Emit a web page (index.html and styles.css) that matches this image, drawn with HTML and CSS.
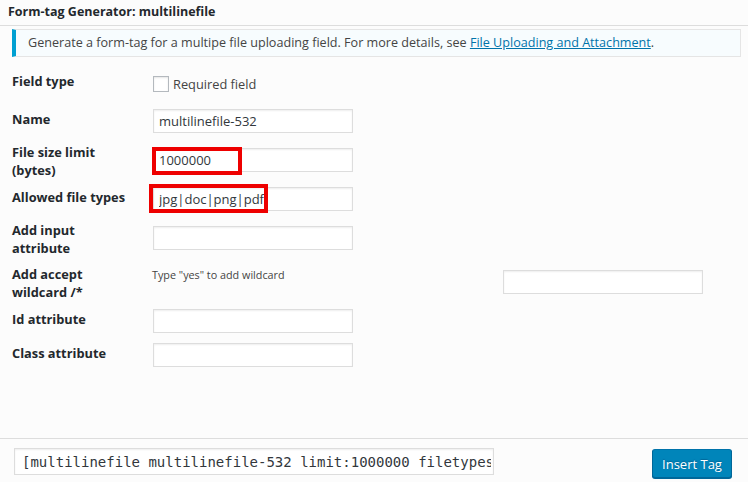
FILE: index.html
```html
<!DOCTYPE html>
<html lang="en">
<head>
<meta charset="utf-8">
<title>Form-tag Generator: multilinefile</title>
<link rel="stylesheet" href="styles.css">
</head>
<body>
<div class="modal">
  <header class="modal-title">Form-tag Generator: multilinefile</header>
  <main class="modal-content">
    <p class="notice">Generate a form-tag for a multipe file uploading field. For more details, see <a href="#">File Uploading and Attachment</a>.</p>
    <div class="form-table">
      <div class="row row-first">
        <div class="label">Field type</div>
        <div class="field">
          <label class="check"><span class="checkbox"></span><span>Required field</span></label>
        </div>
      </div>
      <div class="row">
        <div class="label">Name</div>
        <div class="field"><input class="text-input" type="text" value="multilinefile-532"></div>
      </div>
      <div class="row row-tall">
        <div class="label">File size limit<br>(bytes)</div>
        <div class="field field-offset">
          <div class="annotated">
            <input class="text-input" type="text" value="1000000">
            <span class="highlight highlight-size"></span>
          </div>
        </div>
      </div>
      <div class="row">
        <div class="label">Allowed file types</div>
        <div class="field">
          <div class="annotated">
            <input class="text-input" type="text" value="jpg|doc|png|pdf">
            <span class="highlight highlight-types"></span>
          </div>
        </div>
      </div>
      <div class="row row-tall">
        <div class="label">Add input<br>attribute</div>
        <div class="field field-offset"><input class="text-input" type="text" value=""></div>
      </div>
      <div class="row row-tall">
        <div class="label">Add accept<br>wildcard /*</div>
        <div class="field field-split">
          <span class="hint">Type "yes" to add wildcard</span>
          <input class="text-input input-offset" type="text" value="">
        </div>
      </div>
      <div class="row">
        <div class="label">Id attribute</div>
        <div class="field"><input class="text-input" type="text" value=""></div>
      </div>
      <div class="row">
        <div class="label">Class attribute</div>
        <div class="field"><input class="text-input" type="text" value=""></div>
      </div>
    </div>
  </main>
  <footer class="insert-box">
    <input class="tag-code" type="text" readonly value="[multilinefile multilinefile-532 limit:1000000 filetypes:jpg|doc|png|pdf]">
    <button class="button-primary" type="button">Insert Tag</button>
  </footer>
</div>
</body>
</html>
```

FILE: styles.css
```css
html, body {
  margin: 0;
  padding: 0;
}

body {
  background: #fcfcfc;
  color: #23282d;
  font-family: "Open Sans", "Lato", sans-serif;
  font-size: 12.6px;
}

.modal {
  display: flex;
  flex-direction: column;
  height: 100vh;
}

.modal-title {
  height: 26px;
  box-sizing: border-box;
  line-height: 24px;
  padding-left: 8px;
  font-weight: 700;
  font-size: 12.5px;
  color: #23282d;
  border-bottom: 1px solid #dddddd;
}

.modal-content {
  flex: 1;
}

.notice {
  margin: 3px 7px 0 12px;
  height: 28px;
  box-sizing: border-box;
  line-height: 26px;
  padding-left: 12px;
  border: 1px solid #e5e5e5;
  border-left: 4px solid #00a0d2;
  background: #f7fcfe;
  color: #444;
  font-size: 12.6px;
}

.notice a {
  color: #0073aa;
  text-decoration: underline;
}

.form-table {
  margin-top: 14px;
  padding-left: 12px;
  display: flex;
  flex-direction: column;
}

.row {
  display: flex;
  align-items: flex-start;
  height: 34px;
}

.row-first {
  height: 38px;
}

.row-tall {
  height: 44px;
}

.label {
  width: 141px;
  flex: none;
  font-weight: 700;
  font-size: 12.8px;
  line-height: 18px;
  padding-top: 1px;
  color: #23282d;
}

.row-tall .label {
  padding-top: 0;
}

.field {
  display: flex;
  align-items: flex-start;
}

.field-offset {
  margin-top: 5px;
}

.check {
  display: flex;
  align-items: center;
  gap: 4px;
  margin-top: 5px;
  color: #444;
  line-height: 16px;
  font-size: 12.8px;
}

.checkbox {
  width: 16px;
  height: 16px;
  box-sizing: border-box;
  border: 1px solid #b4b9be;
  background: #fff;
  box-shadow: inset 0 1px 2px rgba(0, 0, 0, 0.1);
}

.text-input {
  width: 200px;
  height: 24px;
  box-sizing: border-box;
  margin: 0;
  padding: 0 5px;
  border: 1px solid #dddddd;
  background: #fff;
  box-shadow: inset 0 1px 2px rgba(0, 0, 0, 0.07);
  font-family: "Open Sans", "Lato", sans-serif;
  font-size: 13px;
  color: #32373c;
  outline: none;
}

.annotated {
  position: relative;
}

.highlight {
  position: absolute;
  border: 4px solid #ee0000;
  box-sizing: border-box;
  pointer-events: none;
}

.highlight-size {
  left: -1px;
  top: -1px;
  width: 90px;
  height: 28px;
}

.highlight-types {
  left: -4px;
  top: -3px;
  width: 119px;
  height: 29px;
}

.field-split {
  margin-left: -1px;
}

.hint {
  width: 351px;
  flex: none;
  font-size: 10.8px;
  line-height: 18px;
  margin-top: 1px;
  color: #444;
}

.input-offset {
  margin-top: 5px;
}

.insert-box {
  height: 44px;
  box-sizing: border-box;
  border-top: 1px solid #dddddd;
  padding: 9px 16px 0 14px;
  display: flex;
  align-items: flex-start;
  justify-content: space-between;
  background: #fcfcfc;
}

.tag-code {
  width: 480px;
  height: 27px;
  box-sizing: border-box;
  margin: 0;
  padding: 0 2px 0 7px;
  border: 1px solid #dddddd;
  background: #fff;
  box-shadow: inset 0 1px 2px rgba(0, 0, 0, 0.07);
  font-family: "DejaVu Sans Mono", monospace;
  font-size: 14px;
  color: #32373c;
  outline: none;
}

.button-primary {
  width: 80px;
  height: 29px;
  margin-top: 1px;
  padding: 0;
  box-sizing: border-box;
  background: #0085ba;
  border: 1px solid #0073aa;
  border-color: #0073aa #006799 #006799;
  border-radius: 3px;
  box-shadow: 0 1px 0 #006799;
  color: #fff;
  font-family: "Open Sans", "Lato", sans-serif;
  font-size: 13px;
  text-shadow: 0 -1px 1px #006799;
  cursor: pointer;
}
```
